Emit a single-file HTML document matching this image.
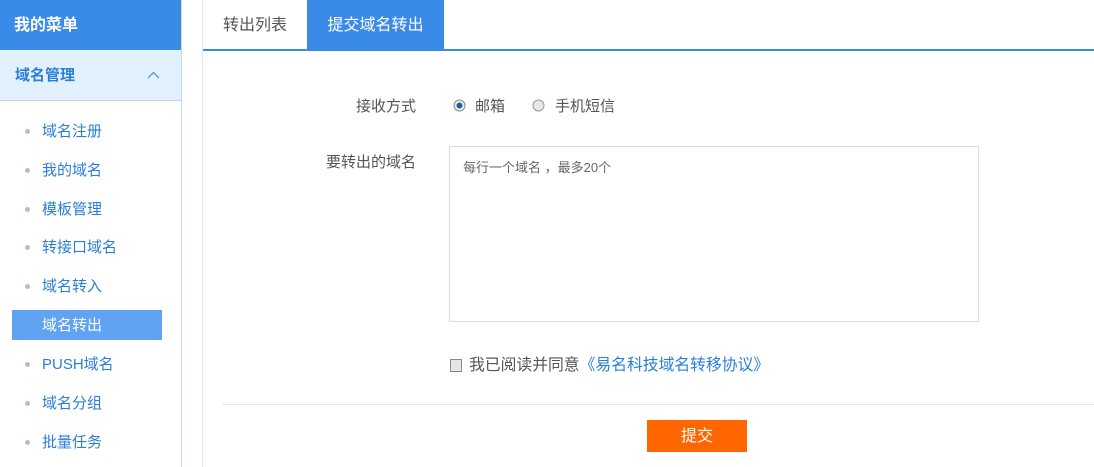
<!DOCTYPE html>
<html><head><meta charset="utf-8"><style>
*{margin:0;padding:0;box-sizing:border-box}
body{width:1094px;height:467px;overflow:hidden;background:#fff;font-family:"Liberation Sans","Noto Sans CJK SC",sans-serif;position:relative}
.sb{position:absolute;left:0;top:0;width:182px;height:467px;border-right:1px solid #c9dcef}
.hd{height:50px;background:#3a8be8;color:#fff;font-weight:bold;font-size:16px;line-height:52px;padding-left:14px}
.grp{height:51px;background:#e3f0fd;border-bottom:1px solid #bcd8f0;color:#2a7ed8;font-weight:bold;font-size:15px;line-height:51px;padding-left:15px;position:relative}
.grp svg{position:absolute;left:147px;top:21px}
.it{position:absolute;left:0;font-size:15px;color:#2a7ed8;height:30px;line-height:32px;padding-left:42px;width:181px}
.it::before{content:"";position:absolute;left:25px;top:13px;width:5px;height:5px;border-radius:50%;background:#b5bccb}
.it.on{background:#5fa3f2;color:#fff;left:12px;width:150px;padding-left:30px}
.it.on::before{display:none}
.main{position:absolute;left:202px;top:0;width:892px;height:467px;border-left:1px solid #e6e6e6}
.tabs{height:51px;border-bottom:2px solid #3a8be8;position:relative}
.tab{position:absolute;top:0;height:49px;line-height:51px;font-size:16px;color:#555;text-align:center}
.lbl{position:absolute;font-size:15px;color:#555;text-align:right;width:200px;left:216px}
</style></head><body>
<div class="sb">
<div class="hd">我的菜单</div>
<div class="grp">域名管理<svg width="13" height="8" viewBox="0 0 13 8"><path d="M1 7L6.5 1.5L12 7" fill="none" stroke="#5a9de6" stroke-width="1.4"/></svg></div>
<div class="it" style="top:116px">域名注册</div>
<div class="it" style="top:155px">我的域名</div>
<div class="it" style="top:194px">模板管理</div>
<div class="it" style="top:232px">转接口域名</div>
<div class="it" style="top:271px">域名转入</div>
<div class="it on" style="top:310px">域名转出</div>
<div class="it" style="top:349px">PUSH域名</div>
<div class="it" style="top:388px">域名分组</div>
<div class="it" style="top:427px">批量任务</div>
</div>
<div class="main">
<div class="tabs">
<div class="tab" style="left:0;width:104px">转出列表</div>
<div class="tab" style="left:104px;width:137px;background:#3a8be8;color:#fff">提交域名转出</div>
</div>
</div>
<div class="lbl" style="top:95px">接收方式</div>
<div class="lbl" style="top:151px">要转出的域名</div>
<svg style="position:absolute;left:453px;top:99px" width="13" height="13"><circle cx="6.5" cy="6.5" r="5.5" fill="#eee" stroke="#888"/><circle cx="6.5" cy="6.5" r="3" fill="#1f5f9a"/></svg>
<div style="position:absolute;left:475px;top:95px;font-size:15px;color:#555">邮箱</div>
<svg style="position:absolute;left:532px;top:99px" width="13" height="13"><circle cx="6.5" cy="6.5" r="5.5" fill="#e8e8e8" stroke="#999"/></svg>
<div style="position:absolute;left:555px;top:95px;font-size:15px;color:#555">手机短信</div>
<div style="position:absolute;left:449px;top:146px;width:530px;height:176px;border:1px solid #dcdcdc;padding:10px 13px;font-size:13px;color:#666">每行一个域名 ，最多20个</div>
<div style="position:absolute;left:450px;top:359px;width:12px;height:13px;border:1px solid #888;background:#e6e6e6"></div>
<div style="position:absolute;left:469px;top:352px;font-size:15.8px;color:#555">我已阅读并同意<span style="color:#2a7ed8">《易名科技域名转移协议》</span></div>
<div style="position:absolute;left:222px;top:404px;width:872px;height:1px;background:#e6e6e6"></div>
<div style="position:absolute;left:647px;top:420px;width:100px;height:32px;background:#ff6600;color:#fff;font-size:16px;text-align:center;line-height:34px">提交</div>
</body></html>
